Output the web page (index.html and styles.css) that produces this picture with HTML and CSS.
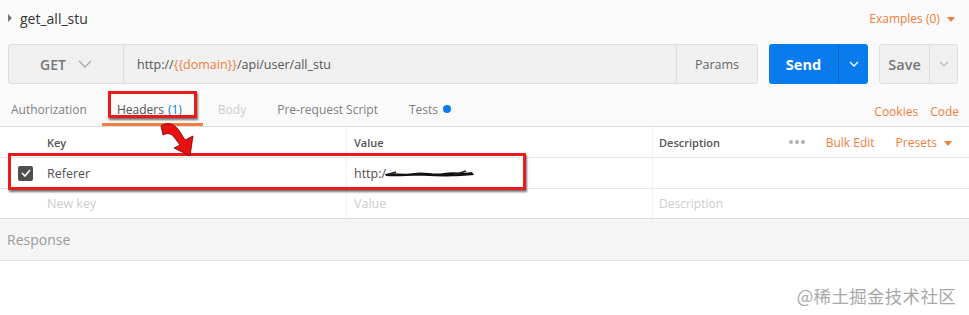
FILE: index.html
```html
<!DOCTYPE html>
<html>
<head>
<meta charset="utf-8">
<link rel="stylesheet" href="styles.css">
</head>
<body>
<div class="page">
  <div class="titlebar">
    <div class="title"><span class="caret-r"></span>get_all_stu</div>
    <div class="examples">Examples (0) <span class="tri"></span></div>
  </div>
  <div class="reqbar">
    <div class="urlgroup">
      <div class="method">GET <svg class="chev" width="14" height="8" viewBox="0 0 14 8"><path d="M1 1l6 6 6-6" fill="none" stroke="#aaa" stroke-width="1.4"/></svg></div>
      <div class="url">http://<span class="var">{{domain}}</span>/api/user/all_stu</div>
      <div class="params">Params</div>
    </div>
    <div class="send"><span class="send-l">Send</span><span class="send-r"><svg width="10" height="6" viewBox="0 0 10 6"><path d="M1 1l4 4 4-4" fill="none" stroke="#fff" stroke-width="1.3"/></svg></span></div>
    <div class="save"><span class="save-l">Save</span><span class="save-r"><svg width="10" height="6" viewBox="0 0 10 6"><path d="M1 1l4 4 4-4" fill="none" stroke="#bbb" stroke-width="1.2"/></svg></span></div>
  </div>
  <div class="tabs">
    <div class="tablist">
      <span class="tab t-auth">Authorization</span>
      <span class="tab active">Headers <span class="count">(1)</span></span>
      <span class="tab disabled">Body</span>
      <span class="tab t-pre">Pre-request Script</span>
      <span class="tab">Tests <span class="dot"></span></span>
    </div>
    <div class="links"><span>Cookies</span><span>Code</span></div>
  </div>
  <div class="table">
    <div class="row head">
      <div class="c0"></div>
      <div class="c1">Key</div>
      <div class="c2">Value</div>
      <div class="c3"><span>Description</span><span class="tools"><span class="dots"><i></i><i></i><i></i></span><span class="lnk">Bulk Edit</span><span class="lnk">Presets <span class="tri"></span></span></span></div>
    </div>
    <div class="row">
      <div class="c0"><span class="check"><svg width="10" height="8" viewBox="0 0 10 8"><path d="M1 4l3 3 5-6" fill="none" stroke="#fff" stroke-width="1.6"/></svg></span></div>
      <div class="c1">Referer</div>
      <div class="c2">http:/<svg class="scribble" width="92" height="10" viewBox="0 0 92 10"><path d="M1 5 C 10 3, 20 6, 30 4 S 50 6, 60 4 S 80 5, 88 3 L 90 6 C 80 7, 60 8, 45 7 S 15 8, 2 7 Z" fill="#111"/><path d="M2 6 L 12 3 M 70 6 L 82 2" stroke="#222" stroke-width="1.5"/></svg></div>
      <div class="c3"></div>
    </div>
    <div class="row ph">
      <div class="c0"></div>
      <div class="c1">New key</div>
      <div class="c2">Value</div>
      <div class="c3">Description</div>
    </div>
  </div>
  <div class="response">Response</div>
  <div class="footer"><span class="wm">@稀土掘金技术社区</span></div>

  <div class="hl hl-tab"></div>
  <div class="hl hl-row"></div>
  <svg class="arrow" width="40" height="40" viewBox="0 0 40 40">
    <path d="M1 5 C 8 0, 15 3, 20 11 L 25 19 L 33 15 L 30 35 L 14 27 L 20 24 L 14 16 C 11 12, 7 12, 3 14 Z" fill="#e81010" stroke="#7a0000" stroke-width="0.8"/>
  </svg>
</div>
</body>
</html>
```
FILE: styles.css
```css
* { box-sizing: border-box; }
html, body { margin: 0; padding: 0; }
body {
  width: 969px;
  height: 315px;
  background: #fff;
  font-family: "Open Sans", "Noto Sans", sans-serif;
  color: #505050;
  font-size: 12px;
  overflow: hidden;
}
.page { position: relative; width: 969px; height: 315px; }
.titlebar {
  height: 40px;
  background: #fafafa;
  display: flex;
  align-items: center;
  justify-content: space-between;
  padding: 0 14px 0 8px;
}
.title { font-size: 14px; color: #333; display: flex; align-items: center; margin-top: -4px; }
.caret-r {
  width: 0; height: 0;
  border-top: 4px solid transparent;
  border-bottom: 4px solid transparent;
  border-left: 4px solid #777;
  margin-right: 8px;
}
.examples { color: #f07e40; font-size: 12px; margin-top: -4px; }
.tri {
  display: inline-block; width: 0; height: 0;
  border-left: 4px solid transparent;
  border-right: 4px solid transparent;
  border-top: 5px solid #f07e40;
  margin-left: 4px; vertical-align: middle;
}
.reqbar {
  height: 48px;
  background: #fafafa;
  display: flex;
  align-items: flex-start;
  padding: 4px 11px 0 8px;
}
.urlgroup {
  width: 750px; height: 40px;
  display: flex;
  border: 1px solid #ddd;
  border-radius: 3px;
  background: #f0f0f0;
}
.method {
  width: 115px;
  display: flex; align-items: center; justify-content: center; gap: 12px;
  font-size: 14px; font-weight: 600; color: #777;
  border-right: 1px solid #ddd;
}
.url { flex: 1; display: flex; align-items: center; padding-left: 13px; color: #555; font-size: 12.5px; }
.var { color: #f07e40; }
.params {
  width: 81px;
  display: flex; align-items: center; justify-content: center;
  border-left: 1px solid #ddd;
  color: #666; font-size: 12.5px;
}
.send {
  margin-left: 11px;
  width: 99px; height: 40px;
  background: #097bed;
  border-radius: 3px;
  display: flex;
  color: #fff;
}
.send-l { width: 69px; display: flex; align-items: center; justify-content: center; font-weight: 700; font-size: 14.5px; }
.send-r { flex: 1; display: flex; align-items: center; justify-content: center; border-left: 1px solid #0762c4; }
.save {
  margin-left: 11px;
  width: 79px; height: 40px;
  background: #f0f0f0;
  border: 1px solid #ddd;
  border-radius: 3px;
  display: flex;
  color: #777;
}
.save-l { width: 49px; display: flex; align-items: center; justify-content: center; font-weight: 600; font-size: 14.5px; }
.save-r { flex: 1; display: flex; align-items: center; justify-content: center; border-left: 1px solid #ddd; }
.tabs {
  height: 39px;
  background: #fafafa;
  border-bottom: 1px solid #ddd;
  display: flex;
  justify-content: space-between;
  align-items: stretch;
  padding: 0 10px 0 11px;
}
.tablist { display: flex; align-items: stretch; }
.tab {
  display: flex; align-items: center;
  padding: 4px 0 0 0;
  font-size: 12px;
  color: #808080;
  border-bottom: 3px solid transparent;
  margin-top: 3px;
}
.t-auth { margin-right: 15px; }
.tab.active { color: #505050; border-bottom-color: #f07e40; padding: 4px 21px 0 15px; margin-right: 15px; }
.tab.active .count { color: #097bed; margin-left: 4px; }
.tab.disabled { color: #ccc; margin-right: 31px; }
.t-pre { margin-right: 31px; }
.dot { display: inline-block; width: 8px; height: 8px; border-radius: 50%; background: #097bed; margin-left: 5px; }
.links { display: flex; gap: 12px; align-items: center; color: #f07e40; font-size: 12px; margin-top: 8px; }
.table { background: #fff; }
.row { display: flex; height: 31px; border-bottom: 1px solid #e6e6e6; }
.row.head { height: 31px; font-weight: 600; color: #555; font-size: 11px; }
.row.ph { height: 30px; border-bottom: 1px solid #ddd; color: #ccc; }
.row > div { display: flex; align-items: center; }
.c0 { width: 40px; justify-content: center; }
.c1 { width: 306px; padding-left: 7px; }
.c2 { width: 307px; padding-left: 7px; border-left: 1px solid #f0f0f0; border-right: 1px solid #f0f0f0; }
.c3 { flex: 1; padding-left: 6px; justify-content: space-between; padding-right: 17px; }
.tools { display: flex; align-items: center; font-weight: 400; }
.dots { display: flex; gap: 2px; margin-right: 21px; }
.dots i { width: 4px; height: 4px; border-radius: 50%; background: #b0b0b0; }
.lnk { color: #f07e40; font-size: 12px; margin-right: 21px; }
.lnk:last-child { margin-right: 0; }
.row .c1, .row .c2 { font-size: 12.5px; }
.row.head .c1, .row.head .c2, .row.head .c3 > span:first-child { font-size: 11px; }
.check { width: 15px; height: 15px; background: #505050; border-radius: 2px; display: flex; align-items: center; justify-content: center; margin-left: 11px; }
.scribble { margin-left: -2px; margin-top: 1px; }
.response {
  height: 42px;
  background: #f5f5f5;
  border-bottom: 1px solid #ddd;
  color: #9a9a9a;
  font-size: 14px;
  display: flex; align-items: center;
  padding-left: 7px;
}
.footer { height: 56px; display: flex; justify-content: flex-end; align-items: flex-start; padding: 22px 13px 0 0; }
.wm { font-size: 17.5px; color: #a8a8a8; font-family: "Noto Sans CJK SC", "Noto Sans", sans-serif; letter-spacing: 0.3px; }
.hl { position: absolute; border: 3px solid #ea1a1a; box-shadow: 1px 2px 2px rgba(0,0,0,0.55); }
.hl-tab { left: 108px; top: 91px; width: 89px; height: 27px; }
.hl-row { left: 8px; top: 153px; width: 518px; height: 37px; }
.arrow { position: absolute; left: 160px; top: 121px; }
```
